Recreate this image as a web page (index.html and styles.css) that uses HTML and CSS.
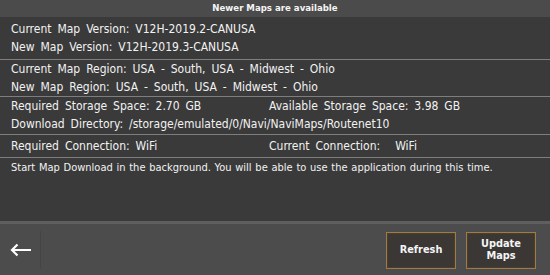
FILE: index.html
```html
<!DOCTYPE html>
<html>
<head>
<meta charset="utf-8">
<link rel="stylesheet" href="styles.css">
</head>
<body>
<div class="screen">
  <header class="title">Newer Maps are available</header>
  <main class="content">
    <section class="group g1">
      <div class="line">Current Map Version: V12H-2019.2-CANUSA</div>
      <div class="line">New Map Version: V12H-2019.3-CANUSA</div>
    </section>
    <section class="group g2">
      <div class="line">Current Map Region: USA - South, USA - Midwest - Ohio</div>
      <div class="line">New Map Region: USA - South, USA - Midwest - Ohio</div>
    </section>
    <section class="group g3">
      <div class="line cols">
        <span>Required Storage Space: 2.70 GB</span>
        <span>Available Storage Space: 3.98 GB</span>
      </div>
      <div class="line">Download Directory: /storage/emulated/0/Navi/NaviMaps/Routenet10</div>
    </section>
    <section class="group g4">
      <div class="line cols">
        <span>Required Connection: WiFi</span>
        <span>Current Connection:<span class="val">WiFi</span></span>
      </div>
    </section>
    <section class="note">Start Map Download in the background. You will be able to use the application during this time.</section>
  </main>
  <footer class="bar">
    <div class="back">
      <svg width="24" height="14" viewBox="0 0 24 14" aria-hidden="true">
        <path d="M22 7H3M8.5 1.5L3 7l5.5 5.5" fill="none" stroke="#ffffff" stroke-width="2.2" stroke-linecap="butt" stroke-linejoin="miter"/>
      </svg>
    </div>
    <div class="spacer"></div>
    <button class="btn">Refresh</button>
    <button class="btn">Update<br>Maps</button>
  </footer>
</div>
</body>
</html>
```

FILE: styles.css
```css
* { box-sizing: border-box; }
html, body { margin: 0; padding: 0; background: #3a3a3a; }
.screen {
  width: 550px;
  height: 275px;
  display: flex;
  flex-direction: column;
  font-family: "DejaVu Sans", sans-serif;
  color: #f2f2f2;
}
.title {
  height: 17px;
  background: #4b4b4b;
  font-weight: bold;
  font-size: 8.6px;
  line-height: 17px;
  text-align: center;
  color: #f4f4f4;
}
.content {
  flex: 1;
  background: #3a3a3a;
  display: flex;
  flex-direction: column;
}
.group {
  padding: 0 0 0 11px;
  border-bottom: 1px solid #7e7e7e;
  font-family: "DejaVu Sans Condensed", "DejaVu Sans", sans-serif;
  font-stretch: condensed;
  font-size: 12px;
  word-spacing: 2.5px;
}
.line { line-height: 18px; height: 18px; white-space: nowrap; }
.g1 { padding-top: 3px; padding-bottom: 3px; }
.g2 { padding-top: 0; padding-bottom: 0; }
.g3 { padding-top: 0; padding-bottom: 1px; }
.g4 { padding-top: 2px; padding-bottom: 2px; }
.cols {
  display: grid;
  grid-template-columns: 258px 1fr;
}
.val { margin-left: 15px; }
.note {
  padding: 2px 0 0 11px;
  font-family: "DejaVu Sans Condensed", "DejaVu Sans", sans-serif;
  font-stretch: condensed;
  font-size: 11px;
  word-spacing: 0.6px;
  line-height: 15px;
  white-space: nowrap;
}
.bar {
  height: 54px;
  background: #4c4c4c;
  border-top: 3px solid #5f5f5f;
  display: flex;
  align-items: center;
  padding: 0 14px 0 0;
  gap: 10px;
}
.back {
  width: 41px;
  height: 38px;
  display: flex;
  align-items: center;
  padding-left: 9px;
  border-right: 1px solid #444444;
}
.back svg { display: block; }
.spacer { flex: 1; }
.btn {
  width: 70px;
  height: 37px;
  background: #3a3734;
  border: 1px solid #a07a45;
  box-shadow: inset 0 0 0 1px #4a3e30;
  color: #f4f4f4;
  font-family: "DejaVu Sans", sans-serif;
  font-weight: bold;
  font-size: 9.8px;
  line-height: 12px;
  padding: 0;
  margin-top: 1px;
}
```
